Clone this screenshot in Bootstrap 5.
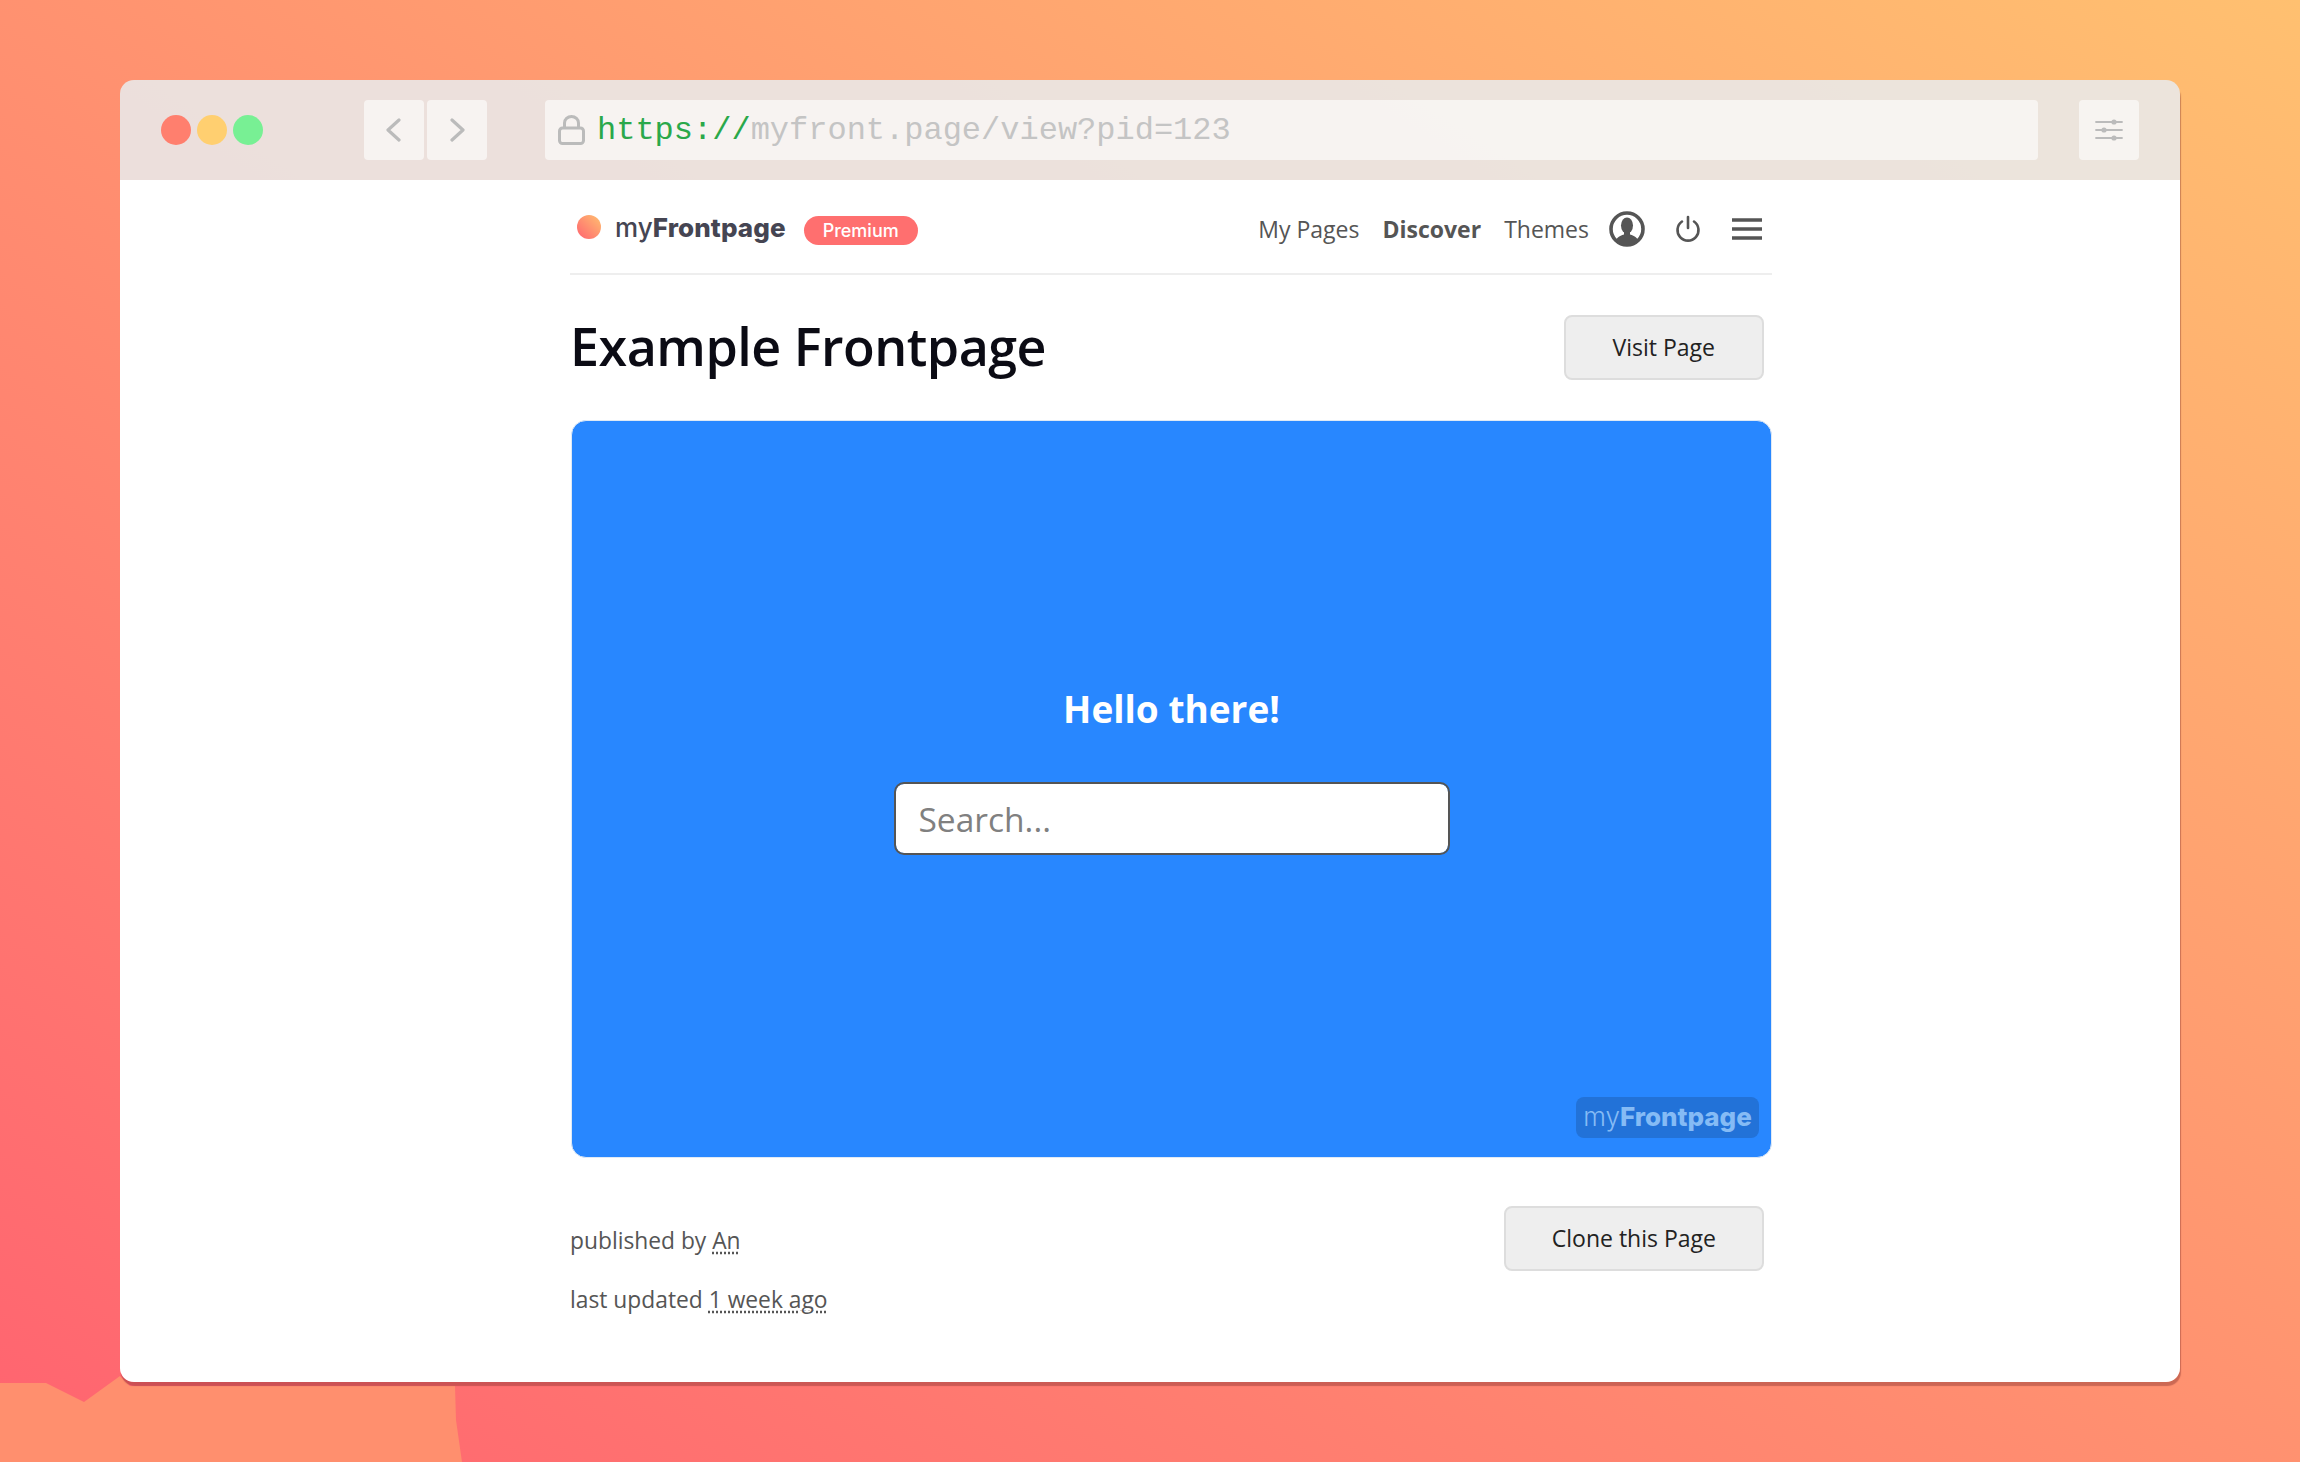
<!DOCTYPE html>
<html lang="en">
<head>
<meta charset="utf-8">
<title>myFrontpage</title>
<link rel="stylesheet" href="https://cdn.jsdelivr.net/npm/bootstrap@5.3.0/dist/css/bootstrap.min.css">
<style>
html,body{height:100%;}
body{margin:0;width:2300px;height:1462px;overflow:hidden;position:relative;background:linear-gradient(to top right,#ff6370,#ffc070);font-family:"Open Sans","Noto Sans",sans-serif;color:#555;}
.bg-shape{position:absolute;left:0;top:0;z-index:0;}
.stage{position:relative;z-index:1;padding:80px 120px;}
.app-window{height:1302px;border-radius:14px;box-shadow:1px 4px 1px rgba(120,40,40,.38);overflow:hidden;}
.top-bar{height:100px;padding:20px 41px;background:rgba(233,233,233,.886);}
.dots{width:102px;margin-right:101px;gap:6px;flex:none;}
.dot-light{width:30px;height:30px;border-radius:50%;}
.tool{width:60px;height:60px;background:rgba(255,255,255,.6);border-radius:4px;flex:none;}
.nav-btns{gap:3px;margin-right:58px;flex:none;}
.url-box{width:1493px;height:60px;margin-right:41px;background:rgba(255,255,255,.6);border-radius:4px;padding-left:13px;font-family:"Liberation Mono",monospace;font-size:32px;color:#c4c4c4;flex:none;}
.url-text{padding-top:2px;}
.url-scheme{color:#2aa84a;margin-left:12px;}
.page-area{background:#fff;height:1202px;padding-left:450px;}
.page-col{width:1202px;}
.top-nav{height:95px;border-bottom:2px solid #eee;padding:4px 10px 0 7px;}
.brand-dot{width:24px;height:24px;border-radius:50%;background:linear-gradient(to top right,#ff6370,#ffc070);margin-right:14px;margin-bottom:4px;}
.brand-name{font-family:Inter,sans-serif;font-size:26px;font-weight:500;color:#454552;letter-spacing:.1px;line-height:1;margin-bottom:2px;}
.brand-name b{font-weight:800;}
.plan-pill{background:#ff6f6f;color:#fff;font-family:Inter,sans-serif;font-weight:500;font-size:18px;padding:0;width:114px;height:29px;line-height:29px;margin-left:18px;margin-top:4px;border-radius:15px;}
.menu-link{color:#555;font-size:23px;line-height:32px;padding:0;margin-right:23px;}
.menu-link.fw-bold{font-weight:700;}
.menu-last{margin-right:20px;}
.nav-ico{color:#555;display:block;}
.page-head{margin-top:40px;height:65px;padding-right:8px;}
.page-title{font-family:"Open Sans",sans-serif;font-size:52px;font-weight:600;color:#0b0b14;margin:0;line-height:62px;letter-spacing:-.5px;}
.soft-btn{background:#eee;border:2px solid #ddd;border-radius:8px;color:#222;font-size:23px;height:65px;padding:0 46px;line-height:60px;}
.visit-btn{padding:0 47px;}
.hero{position:relative;margin-top:40px;margin-left:1px;height:738px;background:#2887ff;border:1px solid #dfe9f5;border-radius:15px;padding-top:261px;}
.hero-title{color:#fff;font-family:"Open Sans",sans-serif;font-size:37px;font-weight:700;line-height:54px;margin:0;text-align:center;}
.hero-search{display:block;width:556px;height:73px;margin:46px auto 0;border:2px solid #555;border-radius:10px;font-size:33.5px;padding:0 23px;color:#333;}
.hero-search::placeholder{color:#808080;opacity:1;}
.mark-tag{position:absolute;right:12px;bottom:19px;width:183px;height:41px;line-height:39px;text-align:center;border-radius:8px;background:#2272d8;color:#85bbf5;font-family:Inter,sans-serif;font-size:26px;font-weight:300;}
.mark-tag b{font-weight:800;}
.foot-row{margin-top:48px;padding-right:8px;}
.foot-meta{font-size:22.8px;color:#555;line-height:32px;padding-top:19px;}
.foot-meta p{margin:0 0 27px;}
.foot-meta a{color:#555;text-decoration:underline dotted;text-underline-offset:3px;}
</style>
</head>
<body>
<svg class="bg-shape" width="2300" height="1462" viewBox="0 0 2300 1462" aria-hidden="true"><path d="M0 1383L46 1383L84 1402L120 1376L130 1386L455 1386L456 1420L462 1462L0 1462Z" fill="#ff8f6e"/></svg>
<div class="stage">
  <div class="app-window d-flex flex-column">
    <div class="top-bar d-flex align-items-center">
      <div class="dots d-flex">
        <span class="dot-light" style="background:#ff7f6e"></span>
        <span class="dot-light" style="background:#ffcf70"></span>
        <span class="dot-light" style="background:#78f094"></span>
      </div>
      <div class="nav-btns d-flex">
        <div class="tool d-flex align-items-center justify-content-center">
          <svg width="16" height="24" viewBox="0 0 16 24"><path d="M14 2L3 12L14 22" fill="none" stroke="#bbb" stroke-width="3.2" stroke-linecap="round" stroke-linejoin="round" transform="translate(-1 0)"/></svg>
        </div>
        <div class="tool d-flex align-items-center justify-content-center">
          <svg width="16" height="24" viewBox="0 0 16 24"><path d="M2 2L13 12L2 22" fill="none" stroke="#bbb" stroke-width="3.2" stroke-linecap="round" stroke-linejoin="round" transform="translate(1 0)"/></svg>
        </div>
      </div>
      <div class="url-box d-flex align-items-center">
        <svg width="27" height="30" viewBox="0 0 27 30"><rect x="1.5" y="13" width="24" height="15.5" rx="3" fill="none" stroke="#bbb" stroke-width="3"/><path d="M6.5 13V8a7 6.5 0 0 1 14 0V13" fill="none" stroke="#bbb" stroke-width="3"/></svg>
        <span class="url-text"><span class="url-scheme">https://</span><span>myfront.page/view?pid=123</span></span>
      </div>
      <div class="tool d-flex align-items-center justify-content-center">
        <svg width="28" height="22" viewBox="0 0 28 22"><g stroke="#bbb" stroke-width="1.8" stroke-linecap="round"><path d="M1 3H27M1 11H27M1 19H27"/></g><g fill="#bbb"><circle cx="19" cy="3" r="2.6"/><circle cx="9" cy="11" r="2.6"/><circle cx="19" cy="19" r="2.6"/></g></svg>
      </div>
    </div>
    <div class="page-area flex-grow-1">
      <div class="page-col">
        <nav class="top-nav navbar flex-nowrap">
          <div class="d-flex align-items-center">
            <span class="brand-dot"></span>
            <span class="brand-name">my<b>Frontpage</b></span>
            <span class="plan-pill badge">Premium</span>
          </div>
          <div class="nav d-flex align-items-center flex-nowrap">
            <a class="nav-link menu-link" href="#">My Pages</a>
            <a class="nav-link menu-link fw-bold" href="#">Discover</a>
            <a class="nav-link menu-link menu-last" href="#">Themes</a>
            <svg class="nav-ico" width="36" height="36" viewBox="0 0 36 36" style="margin-right:30px"><defs><clipPath id="uc"><circle cx="18" cy="18" r="16"/></clipPath></defs><circle cx="18" cy="18" r="16" fill="none" stroke="currentColor" stroke-width="3.6"/><g clip-path="url(#uc)" fill="currentColor"><ellipse cx="18" cy="14.5" rx="6" ry="8"/><path d="M15 20H21V23.5C26 25 30 27 31 36H5C6 27 10 25 15 23.5Z"/></g></svg>
            <svg class="nav-ico" width="26" height="27" viewBox="0 0 26 27" style="margin-right:31px"><path d="M13 2V13" fill="none" stroke="currentColor" stroke-width="2.6" stroke-linecap="round"/><path d="M7 6.5a10.5 10.5 0 1 0 12 0" fill="none" stroke="currentColor" stroke-width="2.6" stroke-linecap="round"/></svg>
            <svg class="nav-ico" width="30" height="22" viewBox="0 0 30 22"><path d="M0 2H30M0 11H30M0 20H30" stroke="currentColor" stroke-width="3.6" fill="none"/></svg>
          </div>
        </nav>
        <div class="page-head d-flex justify-content-between">
          <h1 class="page-title">Example Frontpage</h1>
          <a class="btn soft-btn visit-btn" href="#">Visit Page</a>
        </div>
        <div class="hero">
          <h2 class="hero-title">Hello there!</h2>
          <input class="hero-search form-control" type="text" placeholder="Search...">
          <div class="mark-tag">my<b>Frontpage</b></div>
        </div>
        <div class="foot-row d-flex justify-content-between align-items-start">
          <div class="foot-meta">
            <p>published by <a href="#">An</a></p>
            <p>last updated <a href="#">1 week ago</a></p>
          </div>
          <a class="btn soft-btn" href="#">Clone this Page</a>
        </div>
      </div>
    </div>
  </div>
</div>
<script src="https://cdn.jsdelivr.net/npm/bootstrap@5.3.0/dist/js/bootstrap.bundle.min.js"></script>
</body>
</html>
